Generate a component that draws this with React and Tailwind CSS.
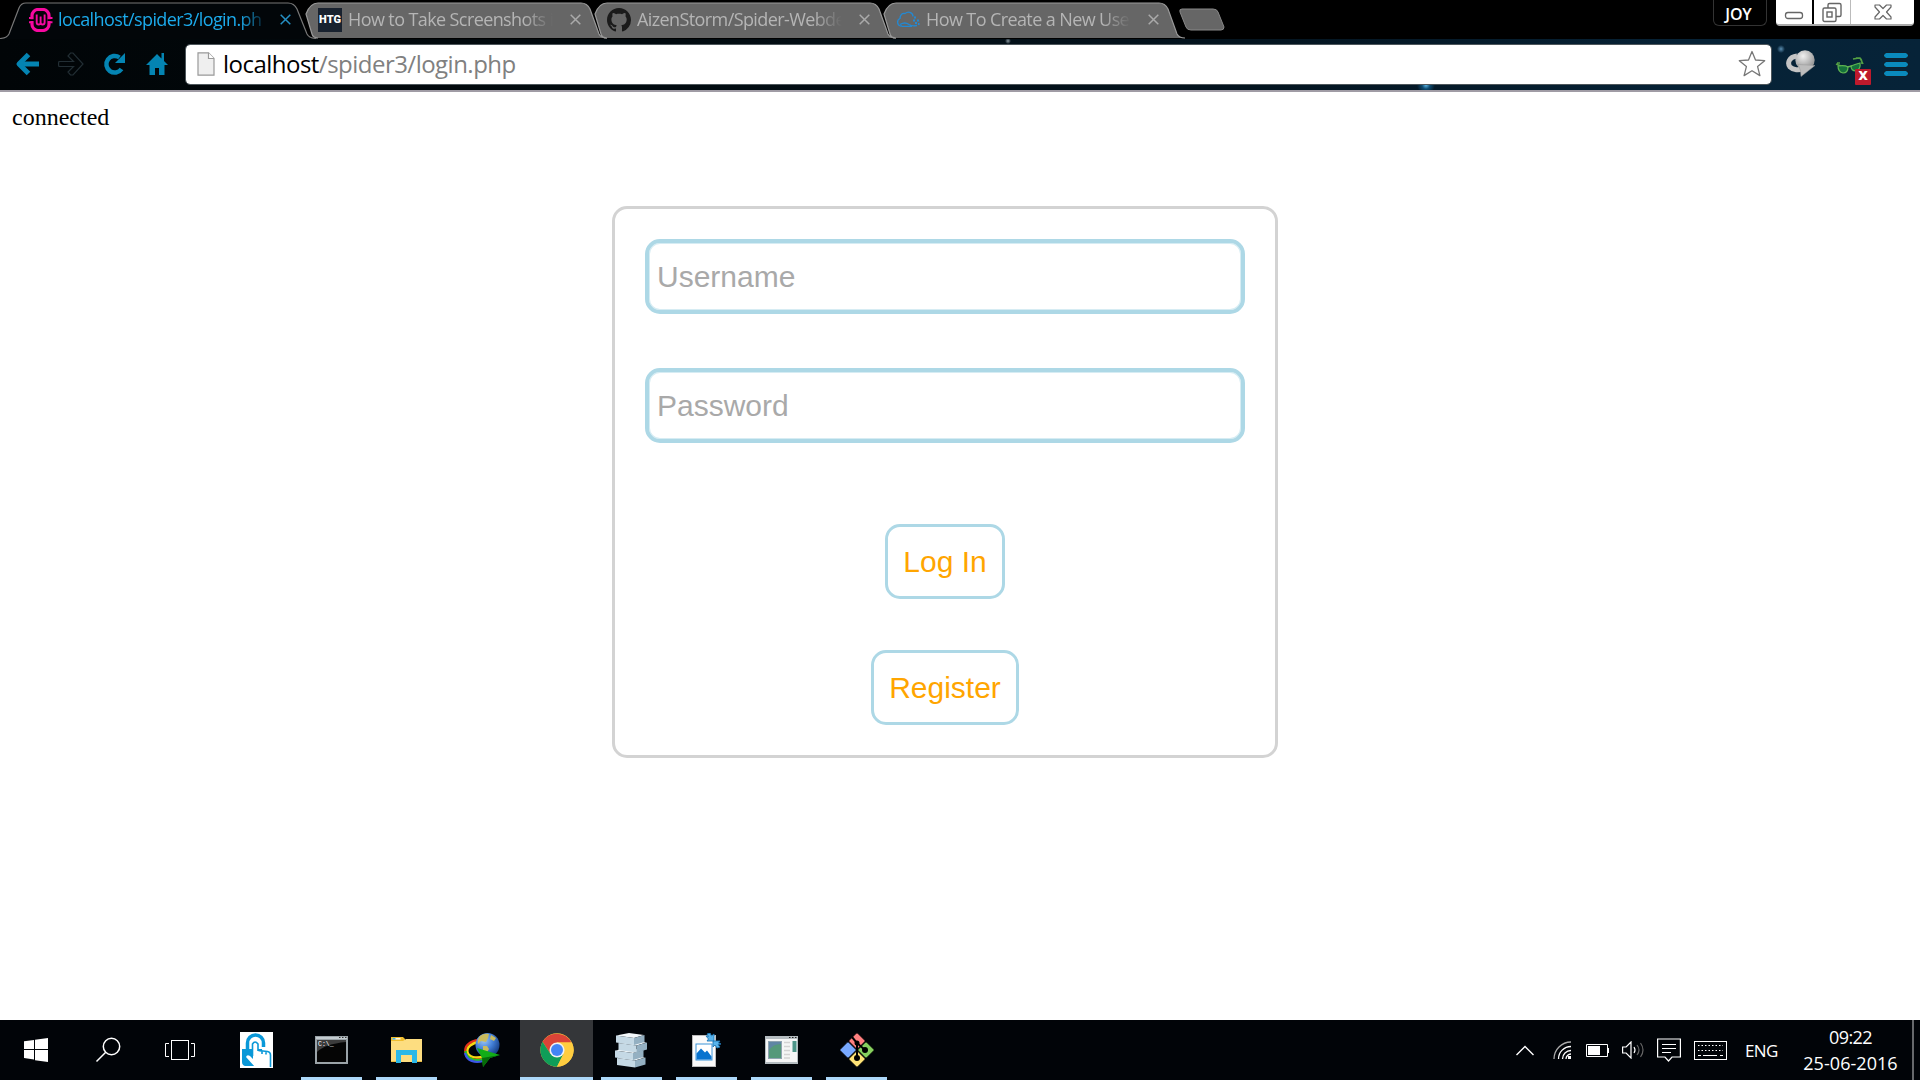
import React from "react";

const TABS = [
  { title: "localhost/spider3/login.ph", active: true },
  { title: "How to Take Screenshots i" },
  { title: "AizenStorm/Spider-Webde" },
  { title: "How To Create a New Use" },
];

function Favicon({ i }) {
  if (i === 0)
    return (
      <svg width="24" height="24" viewBox="0 0 24 24">
        <rect x="3" y="1.500" width="17" height="21" rx="6" fill="#08030a" stroke="#f709a0" strokeWidth="3.200" />
        <path d="M7.700 6.500v8q0 2 2 2t1.900-2V8.500v6q0 2 2 2t2-2v-8" fill="none" stroke="#f709a0" strokeWidth="1.900" />
        <path d="M0 10h4M19.500 10h4M0 14.200h4M19.500 14.200h4" stroke="#f709a0" strokeWidth="2" />
        <path d="M0 12.100h5M18.500 12.100h5" stroke="#000" strokeWidth="1.600" />
      </svg>
    );
  if (i === 1)
    return (
      <div className="flex h-6 w-6 items-center justify-center bg-[#19222f]">
        <span className="font-['Roboto',sans-serif] text-[11px] leading-none font-black text-white">HTG</span>
      </div>
    );
  if (i === 2)
    return (
      <svg width="24" height="24" viewBox="0 0 16 16" fill="#1b1b1b">
        <path d="M8 0C3.580 0 0 3.580 0 8c0 3.540 2.290 6.530 5.470 7.590.4.070.55-.17.55-.38 0-.19-.01-.82-.01-1.490-2.010.37-2.530-.49-2.690-.94-.09-.23-.48-.94-.82-1.130-.28-.15-.68-.52-.01-.53.63-.01 1.080.58 1.230.82.72 1.210 1.870.87 2.330.66.070-.52.28-.87.51-1.070-1.780-.2-3.640-.89-3.640-3.950 0-.87.31-1.590.82-2.150-.08-.2-.36-1.020.080-2.120 0 0 .67-.21 2.200.82.64-.18 1.320-.27 2-.27s1.360.09 2 .27c1.530-1.040 2.200-.82 2.200-.82.44 1.100.16 1.920.080 2.120.51.56.82 1.270.82 2.150 0 3.070-1.870 3.750-3.650 3.950.29.25.54.73.54 1.480 0 1.070-.01 1.930-.01 2.200 0 .21.15.46.55.38A8.010 8.010 0 0 0 16 8c0-4.420-3.580-8-8-8z" />
      </svg>
    );
  return (
    <svg width="24" height="24" viewBox="0 0 24 24" fill="none" stroke="#2389d3" strokeWidth="1.300">
      <path d="M6 18H4.500a4 4 0 0 1-.5-7.500C4 7 6 5 9 5.500c4-3 8-.5 8 3M4 16.500q5-3 9 0 3 2 8 1M6 18.300h10" />
      <path d="M18 9.500h2M17 12.500h2M21 12.500h2M19 15h2M22 16h1.500" strokeWidth="2" />
    </svg>
  );
}

function Tab({ tab, i }) {
  const a = tab.active;
  return (
    <div className={a ? "relative z-10 h-[39px] w-[318px] shrink-0" : "relative -ml-[25px] h-[39px] w-[314px] shrink-0"}>
      <svg className="absolute inset-0" width="100%" height="39" viewBox={a ? "0 0 318 39" : "0 0 314 39"}>
        <path
          d={a ? "M0 39Q7 38 9 34L19 8Q21 3 26 3H288Q294 3 297 9L307 34Q309 38 316 39Z" : "M25 38Q20 38 19 34L13 14Q17 3 25 3H288Q294 3 297 9L306 34Q308 38 314 38Z"}
          fill={a ? "#020609" : "#666"}
        />
        <path
          d={a ? "M0 38.500Q7 38 9 34L19 8Q21 3 26 3H288Q294 3 297 9L307 34Q309 38 316 38.500" : "M25 38Q20 38 19 34L13 14Q17 3 25 3H288Q294 3 297 9L306 34Q308 38 314 38"}
          fill="none"
          stroke={a ? "#777" : "#999"}
          strokeWidth="1.200"
        />
      </svg>
      <div className={a ? "relative flex h-full items-center pl-[29px]" : "relative flex h-full items-center pl-[25px]"}>
        <Favicon i={i} />
        <div className={a ? "ml-[5px] w-[211px] whitespace-nowrap text-[#1cabec] [mask-image:linear-gradient(to_right,black_86%,transparent_100%)]" : "ml-[6px] w-[205px] whitespace-nowrap text-[#b5b5b5] [mask-image:linear-gradient(to_right,black_86%,transparent_100%)]"}>
          <span className="text-[18px] leading-6 tracking-[-0.6px]">{tab.title}</span>
        </div>
        <svg className={a ? "ml-[11px]" : "ml-[17px]"} width="11" height="11" viewBox="0 0 11 11" stroke={a ? "#2590c4" : "#aaa"} strokeWidth="1.500">
          <path d="M.7.7l9.600 9.600M10.300.7L.7 10.300" />
        </svg>
      </div>
    </div>
  );
}

function WindowControls() {
  return (
    <div className="ml-auto flex h-[26px] pr-[6px]">
      <div className="mr-[9px] flex w-[54px] items-center justify-center rounded-b-md border border-t-0 border-[#333] bg-black pt-[2px] pr-[3px] text-[16px] font-semibold tracking-[-0.2px] text-white">JOY</div>
      <div className="flex h-[26px] overflow-hidden rounded-b-[4px] border-b-2 border-[#aaa] bg-white">
        <div className="flex w-[38px] justify-center border-r-2 border-black">
          <svg width="20" height="24"><rect x="1.500" y="12.500" width="17" height="6" rx="2.500" fill="#fff" stroke="#666" strokeWidth="1.300" /></svg>
        </div>
        <div className="flex w-[37px] justify-center border-r border-[#bbb]">
          <svg width="20" height="24" fill="#fff" stroke="#666" strokeWidth="1.400"><rect x="6" y="3.500" width="13" height="13" rx="1.500" /><rect x="1" y="8" width="13" height="13.500" rx="1.500" /><rect x="5" y="12" width="5" height="5" /></svg>
        </div>
        <div className="flex w-[63px] justify-center">
          <svg width="20" height="24" fill="#fff" stroke="#666" strokeWidth="1.200" strokeLinejoin="round"><path d="M2 5h4.500l3.500 3.500L13.500 5H18v2l-4.500 5 4.500 5v2h-4.500L10 15.500 6.500 19H2v-2l4.500-5L2 7z" /></svg>
        </div>
      </div>
    </div>
  );
}

function Toolbar() {
  return (
    <div className="flex h-[51px] items-center bg-[radial-gradient(circle_at_1426px_46px,#5fb8e8_0px,#0c4a70_4px,transparent_9px),radial-gradient(circle_at_1008px_2px,#8a98a0_0px,transparent_3px),radial-gradient(circle_at_1781px_10px,#5a8db0_0px,transparent_4px),linear-gradient(to_right,#010507_0%,#020b10_35%,#04141f_65%,#062236_88%,#062338_100%)] pb-px pl-[14px]">
      <svg width="26" height="24" viewBox="0 0 26 24" fill="none" stroke="#0484b2" strokeWidth="5"><path d="M5 12h20" /><path d="M14.500 2.500L5 12l9.500 9.500" strokeLinejoin="round" /></svg>
      <svg className="ml-[18px]" width="26" height="24" viewBox="0 0 26 24" fill="none" stroke="#222e34" strokeWidth="1.200"><path d="M1 9.500h14.500L10 4l2.500-3h2.500l10 11-10 11h-2.500L10 20l5.500-5.500H1q-1-2.500 0-5z" /></svg>
      <svg className="ml-[19px]" width="24" height="24" viewBox="0 0 24 24"><path d="M18.500 17A8.300 8.300 0 1 1 16.500 5.500" fill="none" stroke="#0484b2" strokeWidth="4.500" /><path d="M22 1v10H12z" fill="#0484b2" /></svg>
      <svg className="ml-[19px]" width="22" height="24" viewBox="0 0 22 24" fill="#0484b2"><path d="M11 2L0 13h3.500v10H9v-7h4v7h5.500V13H22l-4-4V1h-2.500v5.500z" /></svg>
      <div className="ml-[17px] flex h-[41px] w-[1587px] items-center rounded-[5px] border border-[#4d565b] bg-white bg-clip-padding pr-[5px] pl-[11px]">
        <svg width="18" height="24" viewBox="0 0 18 24"><path d="M1 .8h10.500L17 6.500v16.700H1z" fill="#efefef" stroke="#999" strokeWidth="1.200" /><path d="M11.500.8v5.700H17" fill="#fff" stroke="#999" strokeWidth="1.200" /></svg>
        <span className="-mt-px ml-[8px] text-[24px] leading-8 tracking-[-0.52px] text-[#808080]"><span className="text-black">localhost</span>/spider3/login.php</span>
        <svg className="ml-auto" width="28" height="28" viewBox="0 0 28 28"><path d="M14 1.500l3.500 8.500 9.200.7-7.100 5.900 2.300 9L14 20.700l-7.900 4.900 2.300-9-7.100-5.900 9.200-.7z" fill="#fff" stroke="#777" strokeWidth="1.300" strokeLinejoin="round" /></svg>
      </div>
      <svg className="-mt-[2px] ml-[13px]" width="32" height="30" viewBox="0 0 32 30">
        <defs><radialGradient id="gg" cx=".4" cy=".3" r=".8"><stop offset="0" stopColor="#f0f0f0" /><stop offset="1" stopColor="#858585" /></radialGradient></defs>
        <path d="M12 8C4 9 2 15 5 19c3 3 9 4 14 1" fill="none" stroke="#c4c4c4" strokeWidth="5" />
        <circle cx="20" cy="12" r="9.700" fill="url(#gg)" />
        <path d="M13 16.500l17 1-14 11-.5-6z" fill="#bdbdbd" stroke="#999" strokeWidth=".5" />
      </svg>
      <div className="relative ml-[18px] h-[26px] w-[36px] pt-[5px]">
        <svg width="30" height="18" viewBox="0 0 30 18"><path d="M1 8l5 2M18 3l6-1q3 0 3 6M5 7l-3 0M21 2h4l3 6" fill="none" stroke="#54a044" strokeWidth="1.600" /><path d="M3 10q7-1 10 1 0 6-5 6-5-1-5-7zM16 10q5-2 9-3 1 6-4 8-5 0-5-5z" fill="#15713b" stroke="#5fb552" strokeWidth="1.200" /><path d="M12 11l5-1" stroke="#5fb552" strokeWidth="1.500" /></svg>
        <div className="absolute right-0 -bottom-[8px] flex h-[16px] w-[16px] items-center justify-center rounded-[1px] bg-[#be1a2c] font-['DejaVu_Sans',sans-serif] text-[15px] leading-none font-bold text-white"><span className="-mt-[3px]">x</span></div>
      </div>
      <div className="ml-[13px] flex w-[24px] flex-col gap-[4px]">
        {[0, 1, 2].map((k) => <div key={k} className="h-[5px] rounded-sm bg-[#0a8abc] outline-1 outline-[#10202b]" />)}
      </div>
    </div>
  );
}

function Touch() {
  return (
    <svg width="33" height="36" viewBox="0 0 33 36"><rect width="33" height="36" fill="#fff" /><path d="M7.500 17v-6a8 8 0 0 1 16 0v4" fill="none" stroke="#0a98d8" strokeWidth="3.500" /><path d="M2 17h11v7h5v-7h4l2 17H5q-3-1-3-4z" fill="#0a98d8" /><path d="M13 11q2.500-3 5 0v8l9 1q3 1 3 4v11H15L6 25q1-3 4-1l3 3z" fill="#fff" /><path d="M12.500 24V12q2.500-4 5.500 0v7M30.500 35V23q0-3-3-3.500l-9-1M22 19v3M26 19.500v3" fill="none" stroke="#0a98d8" strokeWidth="1.600" /></svg>
  );
}
function Cmd() {
  return (
    <svg width="33" height="28" viewBox="0 0 33 28"><rect width="33" height="28" fill="#9aa3a8" /><rect x="1" y="1" width="31" height="2" fill="#c3ccd1" /><path d="M24 1.500h1.500M27 1.500h1.500M30 1.500h1.500" stroke="#333" /><rect x="2" y="4" width="29" height="22" fill="#050505" /><path d="M2 4h29v2Q10 8 2 16z" fill="#3c3c3c" /><text x="3" y="10" fontSize="6.500" fill="#fff" fontFamily="Liberation Mono">C:\_</text></svg>
  );
}
function Folder() {
  return (
    <svg width="33" height="28" viewBox="0 0 33 28"><path d="M1 1h12l2 2v3H1z" fill="#f0bd2e" /><path d="M1 5h12l3-2h16v23H1z" fill="#fddd80" /><path d="M2.500 2.800h8" stroke="#fff" strokeWidth="1.400" /><path d="M2.500 2.800h3" stroke="#35aee0" strokeWidth="1.400" /><path d="M6 27V14h21v13h-5v-8H11v8z" fill="#2bb8e8" /><path d="M1 25.500h5M27 25.500h5" stroke="#eabd42" /></svg>
  );
}
function Idm() {
  return (
    <svg width="36" height="34" viewBox="0 0 36 34">
      <defs><radialGradient id="globe" cx=".35" cy=".3" r=".75"><stop offset="0" stopColor="#9fc8f5" /><stop offset=".5" stopColor="#4480d8" /><stop offset="1" stopColor="#12397f" /></radialGradient></defs>
      <g fill="none" strokeWidth="2.300"><path d="M15 7C6 8 0 13 1.500 19.500S12 28 20 25" stroke="#e5301b" /><path d="M15 9C8 10 2.500 14 3.500 19S12 26 20 23" stroke="#f6d911" /><path d="M1.500 18c.5 7 9 11 18 8" stroke="#28c523" /><path d="M1 20c2 8 10 10.500 18 8" stroke="#3c58e8" /></g>
      <circle cx="23.500" cy="12" r="12" fill="url(#globe)" />
      <path d="M16 3q4-3 9-2l-1 4-2 4-5-1-3 3q-1-4 2-8zM27 2l5 3-2 3-4-2zM19 13l4 0 2 3-3 5-3-3z" fill="#c9bb5d" />
      <path d="M13 15l23 7-10 3-7 9-1-9z" fill="#12ad17" /><path d="M18 25l18-3-10 3-7 9z" fill="#066c0a" />
    </svg>
  );
}
function Chrome() {
  return (
    <svg width="34" height="34" viewBox="0 0 48 48"><circle cx="24" cy="24" r="23.500" fill="#ffcd40" /><path d="M3.600 12.300A23.500 23.500 0 0 1 44.400 13.300H24L14.700 29.400z" fill="#db4437" /><path d="M3.600 12.300A23.500 23.500 0 0 0 24 47.500L33.300 29.300H14.700z" fill="#0f9d58" /><path d="M24 13.300h21A23.500 23.500 0 0 1 24 47.500l9.300-18.200z" fill="#ffcd40" /><circle cx="24" cy="24" r="10.700" fill="#f1f1f1" /><circle cx="24" cy="24" r="8.500" fill="#4285f4" /></svg>
  );
}
function Stack() {
  return (
    <svg width="33" height="35" viewBox="0 0 33 35">
      {[[2, 25], [0, 17.5], [3.5, 10], [1, 2.5]].map(([dx, y], k) => (
        <g key={k}><path d={`M${dx} ${y}l13-2.500 15 2-10 3z`} fill="#f2f7fa" /><path d={`M${dx} ${y}l18 2.500v7l-18-2.500z`} fill="#c5d9e5" /><path d={`M${dx + 18} ${y + 2.5}l10.500-3v7l-10.500 3z`} fill="#94b0c2" /></g>
      ))}
    </svg>
  );
}
function Picture() {
  return (
    <svg width="30" height="34" viewBox="0 0 30 34"><rect x=".5" y="2.500" width="23" height="31" fill="#fafafa" stroke="#bbb" /><rect x="4" y="11" width="16" height="16" fill="#fff" stroke="#3b93d8" /><path d="M4.500 26.500v-6l4.500-5 4 4 2-2 4.500 6v3z" fill="#0873cf" /><path d="M14 3l2.500.5L15 1l3-1 1.500 3L22 1v7h-7l1.500-2zM29 11l-3 .5L28 14l-3 1-2-3-2 2V8h7l-1.500 2z" fill="#58b4ec" stroke="#1e78b8" strokeWidth=".9" /></svg>
  );
}
function Panel() {
  return (
    <svg width="33" height="28" viewBox="0 0 33 28"><rect width="33" height="28" fill="#b5bdc1" /><path d="M24 1.500h1.500M27 1.500h1.500M30 1.500h1.500" stroke="#222" /><rect x="1" y="3" width="31" height="23" fill="#f5f6f6" /><rect x="3" y="5" width="14" height="18" fill="#8fa3b0" /><rect x="4" y="6" width="12" height="16" fill="#55997a" /><path d="M4 14q4-6 12-6V6H4z" fill="#5f86a4" /><path d="M19 6.500h6M19 10.500h6M19 14.500h6M19 18.500h6M19 22h6" stroke="#d3d3d3" strokeWidth="1.500" /><rect x="27.500" y="5" width="4" height="11" fill="#4e9689" /></svg>
  );
}
function Git() {
  return (
    <svg width="36" height="36" viewBox="0 0 36 36"><g stroke="#000" strokeWidth=".8"><rect x="12" y="3" width="12" height="12" rx="1" transform="rotate(45 18 9)" fill="#ff8080" /><rect x="3" y="12" width="12" height="12" rx="1" transform="rotate(45 9 18)" fill="#78a9ff" /><rect x="21" y="12" width="12" height="12" rx="1" transform="rotate(45 27 18)" fill="#87d15f" /><rect x="12" y="21" width="12" height="12" rx="1" transform="rotate(45 18 27)" fill="#ffe477" /></g><path d="M13 5l5 6v15M18 11l8 7" fill="none" stroke="#000" strokeWidth="2" /><circle cx="18" cy="11" r="2.500" /><circle cx="18" cy="26" r="3" /><circle cx="26" cy="18" r="3" /></svg>
  );
}

const APPS = [
  { Icon: Touch },
  { Icon: Cmd, open: true },
  { Icon: Folder, open: true },
  { Icon: Idm },
  { Icon: Chrome, focus: true },
  { Icon: Stack, open: true },
  { Icon: Picture, open: true },
  { Icon: Panel, open: true },
  { Icon: Git, open: true },
];

function Taskbar() {
  return (
    <div className="flex h-[60px] items-center bg-[#010408] text-white">
      <div className="flex w-[72px] justify-center">
        <svg width="24" height="24" viewBox="0 0 24 24" fill="#fff"><path d="M0 3.300l10-1.400V11H0zM11 1.700L24 0v11H11zM0 12h10v9.500L0 20zM11 12h13v12l-13-1.800z" /></svg>
      </div>
      <div className="flex w-[72px] justify-center">
        <svg width="26" height="26" viewBox="0 0 26 26" fill="none" stroke="#fff" strokeWidth="1.500"><circle cx="16.500" cy="9.500" r="8.200" /><path d="M10.700 15.300L1.500 24.500" /></svg>
      </div>
      <div className="flex w-[72px] justify-center">
        <svg width="30" height="20" viewBox="0 0 30 20" fill="none" stroke="#fff"><rect x="6.500" y=".5" width="17" height="19" /><path d="M4 3.500H.5v13H4M26 3.500h3.500v13H26" /></svg>
      </div>
      <div className="ml-[3px] flex h-full">
        {APPS.map(({ Icon, open, focus }, k) => (
          <div key={k} className={focus ? "flex h-full w-[75px] flex-col items-center px-px" : "flex h-full w-[75px] flex-col items-center px-[7px]"}>
            <div className={focus ? "flex w-full flex-1 items-center justify-center bg-[#343639] pt-[3px]" : "flex w-full flex-1 items-center justify-center pt-[3px]"}><Icon /></div>
            <div className={open || focus ? "h-[3px] w-full bg-[#acd8f9]" : "h-[3px] w-full"} />
          </div>
        ))}
      </div>
      <div className="ml-auto flex h-full items-center">
        <svg width="18" height="11" viewBox="0 0 18 11" fill="none" stroke="#fff" strokeWidth="1.400"><path d="M.5 10L9 1.500 17.500 10" /></svg>
        <svg className="ml-[19px]" width="18" height="18" viewBox="0 0 18 18" fill="none" stroke="#fff" strokeWidth="1.300"><path d="M1 18A17 17 0 0 1 18 1" stroke="#aaa" /><path d="M5.500 18A12.500 12.500 0 0 1 18 5.500M9.500 18A8.500 8.500 0 0 1 18 9.500M13 18a5 5 0 0 1 5-5" /><rect x="15" y="15" width="3" height="3" fill="#fff" stroke="none" /></svg>
        <svg className="ml-[15px]" width="23" height="13" viewBox="0 0 23 13"><path d="M.5.5h21v12H.5z" fill="none" stroke="#fff" /><rect x="2" y="2" width="12" height="9" fill="#fff" /><rect x="22" y="4" width="1" height="5" fill="#fff" /></svg>
        <svg className="ml-[13px]" width="23" height="18" viewBox="0 0 23 18" fill="none" stroke="#fff" strokeWidth="1.200"><path d="M.6 6h3.500L9 1v16l-4.900-5H.6z" /><path d="M12 6q2 3 0 6" /><path d="M15 4q4 5 0 10M18.500 2q5 7 0 14" stroke="#666" /></svg>
        <svg className="ml-[12px]" width="24" height="25" viewBox="0 0 24 25" fill="none" stroke="#fff" strokeWidth="1.200"><path d="M.6 1h22.800v18H15l-3.500 4L8 19H.6zM5 6.500h14M5 10.500h14M5 14.500h9" /></svg>
        <svg className="ml-[13px]" width="33" height="19" viewBox="0 0 33 19" fill="none" stroke="#fff"><rect x=".5" y=".5" width="32" height="18" /><path d="M4 4.500h25M4 9.500h25" strokeDasharray="1.500 2" /><path d="M4 14.500h3M9 14.500h14M26 14.500h3" /></svg>
        <span className="ml-[18px] w-[34px] pt-px text-[17px] tracking-[-0.6px]">ENG</span>
        <div className="ml-[24px] flex w-[95px] flex-col items-center text-[18px] leading-[26px] whitespace-nowrap">
          <span className="tracking-[-0.6px]">09:22</span>
          <span className="tracking-[0.05px]">25-06-2016</span>
        </div>
        <div className="ml-[14px] h-full w-[8px] border-l-2 border-[#66686b]" />
      </div>
    </div>
  );
}

const FIELD = "h-[75px] w-[600px] rounded-[15px] border-4 border-[#add8e6] px-[8px] shadow-[inset_0_0_0_1px_#d6ecf3] placeholder:text-[#a9a9a9]";

function LoginPage() {
  return (
    <div className="flex-1 bg-white">
      <p className="pt-[12px] pl-[12px] font-['Liberation_Serif',serif] text-[24px] leading-[27px] text-black">connected</p>
      <form className="mt-[75px] ml-[612px] flex h-[552px] w-[666px] flex-col items-center rounded-[15px] border-[3px] border-[#d3d3d3] pt-[30px] font-['Liberation_Sans',sans-serif] text-[30px]">
        <input placeholder="Username" className={FIELD} />
        <input placeholder="Password" className={`mt-[54px] ${FIELD}`} />
        <button type="button" className="mt-[81px] h-[75px] rounded-[15px] border-[3px] border-[#add8e6] px-[15px] text-[#ffa500]">Log In</button>
        <button type="button" className="mt-[51px] h-[75px] rounded-[15px] border-[3px] border-[#add8e6] px-[15px] text-[#ffa500]">Register</button>
      </form>
    </div>
  );
}

export default function App() {
  return (
    <div className="flex h-[1080px] w-[1920px] flex-col overflow-hidden bg-black font-['Open_Sans','Noto_Sans',sans-serif]">
      <div className="flex h-[39px] shrink-0">
        {TABS.map((t, i) => <Tab key={i} tab={t} i={i} />)}
        <svg className="mt-[8px] -ml-[6px]" width="46" height="23" viewBox="0 0 46 23"><path d="M3 1h31q4 0 5 3l6 15q0 3-3 3H12q-4 0-5-3L1 4q-1-3 2-3z" fill="#666" stroke="#888" /></svg>
        <WindowControls />
      </div>
      <Toolbar />
      <div className="h-[2px] bg-[#a09ca5]" />
      <LoginPage />
      <Taskbar />
    </div>
  );
}
